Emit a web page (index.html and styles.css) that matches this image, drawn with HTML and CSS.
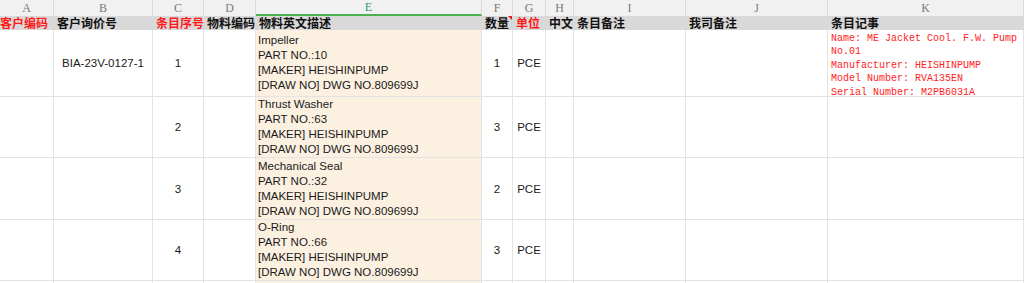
FILE: index.html
```html
<!DOCTYPE html>
<html lang="zh">
<head>
<meta charset="utf-8">
<title>Sheet</title>
<link rel="stylesheet" href="styles.css">
</head>
<body>
<div class="sheet">
  <div class="row letters">
    <div class="lt">A</div><div class="lt">B</div><div class="lt">C</div><div class="lt">D</div>
    <div class="lt sel">E</div><div class="lt">F</div><div class="lt">G</div><div class="lt">H</div>
    <div class="lt">I</div><div class="lt">J</div><div class="lt">K</div>
  </div>
  <div class="row heads">
    <div class="hd red first">客户编码</div>
    <div class="hd">客户询价号</div>
    <div class="hd red">条目序号</div>
    <div class="hd">物料编码</div>
    <div class="hd">物料英文描述</div>
    <div class="hd note">数量</div>
    <div class="hd red">单位</div>
    <div class="hd">中文</div>
    <div class="hd">条目备注</div>
    <div class="hd">我司备注</div>
    <div class="hd">条目记事</div>
  </div>

  <div class="row">
    <div class="c"></div>
    <div class="c ctr">BIA-23V-0127-1</div>
    <div class="c ctr">1</div>
    <div class="c"></div>
    <div class="c desc">Impeller<br>PART NO.:10<br>[MAKER] HEISHINPUMP<br>[DRAW NO] DWG NO.809699J</div>
    <div class="c ctr">1</div>
    <div class="c ctr">PCE</div>
    <div class="c"></div>
    <div class="c"></div>
    <div class="c"></div>
    <div class="c memo">Name: ME Jacket Cool. F.W. Pump No.01<br>Manufacturer: HEISHINPUMP<br>Model Number: RVA135EN<br>Serial Number: M2PB6031A</div>
  </div>

  <div class="row">
    <div class="c"></div>
    <div class="c"></div>
    <div class="c ctr">2</div>
    <div class="c"></div>
    <div class="c desc">Thrust Washer<br>PART NO.:63<br>[MAKER] HEISHINPUMP<br>[DRAW NO] DWG NO.809699J</div>
    <div class="c ctr">3</div>
    <div class="c ctr">PCE</div>
    <div class="c"></div>
    <div class="c"></div>
    <div class="c"></div>
    <div class="c"></div>
  </div>

  <div class="row">
    <div class="c"></div>
    <div class="c"></div>
    <div class="c ctr">3</div>
    <div class="c"></div>
    <div class="c desc">Mechanical Seal<br>PART NO.:32<br>[MAKER] HEISHINPUMP<br>[DRAW NO] DWG NO.809699J</div>
    <div class="c ctr">2</div>
    <div class="c ctr">PCE</div>
    <div class="c"></div>
    <div class="c"></div>
    <div class="c"></div>
    <div class="c"></div>
  </div>

  <div class="row">
    <div class="c"></div>
    <div class="c"></div>
    <div class="c ctr">4</div>
    <div class="c"></div>
    <div class="c desc">O-Ring<br>PART NO.:66<br>[MAKER] HEISHINPUMP<br>[DRAW NO] DWG NO.809699J</div>
    <div class="c ctr">3</div>
    <div class="c ctr">PCE</div>
    <div class="c"></div>
    <div class="c"></div>
    <div class="c"></div>
    <div class="c"></div>
  </div>

  <div class="row">
    <div class="c tail"></div><div class="c tail"></div><div class="c tail"></div><div class="c tail"></div>
    <div class="c desc tail"></div><div class="c tail"></div><div class="c tail"></div><div class="c tail"></div>
    <div class="c tail"></div><div class="c tail"></div><div class="c tail"></div>
  </div>
</div>
</body>
</html>
```

FILE: styles.css
```css
html, body {
  margin: 0;
  padding: 0;
  background: #ffffff;
  overflow: hidden;
}

.sheet {
  display: grid;
  grid-template-columns: 54px 99px 51px 52px 226px 31px 33px 28px 112px 142px 196px;
  grid-template-rows: 16px 14px 67px 61px 62px 61px 2px;
  width: 1024px;
  font-family: "Liberation Sans", Arial, "Noto Sans CJK SC", sans-serif;
  font-size: 11.5px;
  color: #1a1a1a;
}

.row {
  display: contents;
}

.lt {
  background: #f1f1f1;
  border-right: 1px solid #d9d9d9;
  box-sizing: border-box;
  display: flex;
  align-items: center;
  justify-content: center;
  font-family: "Liberation Serif", "DejaVu Serif", serif;
  font-size: 12px;
  color: #7a7a7a;
}

.lt.sel {
  color: #2e9a88;
  border-bottom: 2px solid #4caf50;
}

.hd {
  background: #d9d9d9;
  box-sizing: border-box;
  display: flex;
  align-items: center;
  padding-left: 3px;
  white-space: nowrap;
  overflow: visible;
  font-family: "Noto Sans CJK SC", "DejaVu Sans", sans-serif;
  font-weight: 700;
  font-size: 12px;
  line-height: 14px;
  color: #111111;
  position: relative;
}

.hd.first {
  padding-left: 0;
}

.hd.red {
  color: #ff1a1a;
}

.hd.note::after {
  content: "";
  position: absolute;
  top: 0;
  right: 1px;
  width: 0;
  height: 0;
  border-top: 4px solid #e02020;
  border-left: 4px solid transparent;
}

.c {
  box-sizing: border-box;
  border-right: 1px solid #e3e3e3;
  border-bottom: 1px solid #e3e3e3;
  display: flex;
  align-items: center;
  overflow: hidden;
  background: #ffffff;
}

.c.tail {
  border-bottom: 0;
}

.ctr {
  justify-content: center;
}

.desc {
  background: #fcf1e1;
  padding-left: 2px;
  line-height: 15px;
  white-space: nowrap;
}

.memo {
  align-items: flex-start;
  padding: 2px 0 0 3px;
  font-family: "Liberation Mono", "DejaVu Sans Mono", monospace;
  font-size: 10px;
  line-height: 13.4px;
  color: #ff2222;
}
```
